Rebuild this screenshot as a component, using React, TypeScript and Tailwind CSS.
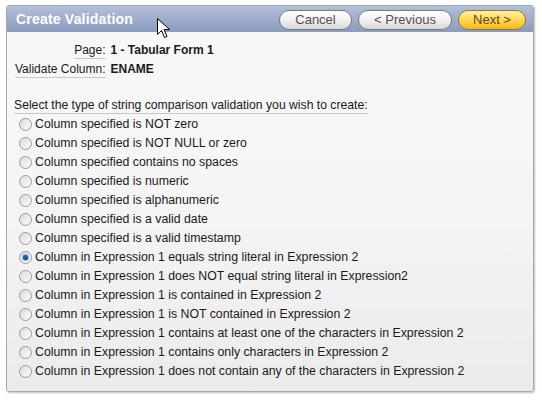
import React from "react";

const options = [
  "Column specified is NOT zero",
  "Column specified is NOT NULL or zero",
  "Column specified contains no spaces",
  "Column specified is numeric",
  "Column specified is alphanumeric",
  "Column specified is a valid date",
  "Column specified is a valid timestamp",
  "Column in Expression 1 equals string literal in Expression 2",
  "Column in Expression 1 does NOT equal string literal in Expression2",
  "Column in Expression 1 is contained in Expression 2",
  "Column in Expression 1 is NOT contained in Expression 2",
  "Column in Expression 1 contains at least one of the characters in Expression 2",
  "Column in Expression 1 contains only characters in Expression 2",
  "Column in Expression 1 does not contain any of the characters in Expression 2",
];

function Radio({ checked }: { checked: boolean }) {
  return (
    <span className="relative inline-flex w-[13px] h-[13px] rounded-full border border-[#9a9a9a] bg-gradient-to-br from-[#dcdcdc] to-[#fbfbfb] items-center justify-center shrink-0">
      {checked && (
        <span className="w-[7px] h-[7px] rounded-full bg-gradient-to-b from-[#2b6fc0] to-[#0d3f85] border border-[#6aa0dc]" />
      )}
    </span>
  );
}

function Btn({ label, primary }: { label: string; primary?: boolean }) {
  return (
    <div
      className={
        "h-[20px] rounded-full border flex items-center justify-center text-[13px] " +
        (primary
          ? "border-[#8a7a3a] bg-gradient-to-b from-[#fff0a8] via-[#ffd84a] to-[#f5b81a] text-[#5a4a20]"
          : "border-[#7a7a7a] bg-gradient-to-b from-[#ffffff] via-[#f1f1f1] to-[#d6d6d6] text-[#505050]")
      }
    >
      {label}
    </div>
  );
}

export default function App() {
  return (
    <div
      className="w-[542px] h-[400px] bg-white relative"
      style={{ fontFamily: '"Liberation Sans", Arial, sans-serif' }}
    >
      <div className="pt-[5px] pl-[6px]">
        <div className="w-[528px] h-[387px] border border-[#a8a8a8] rounded-[3px] shadow-[1px_1px_2px_rgba(0,0,0,0.25)] flex flex-col overflow-hidden bg-gradient-to-b from-[#f8f8f8] via-[#f5f5f5] to-[#ebebeb]">
          <div className="h-[26px] shrink-0 bg-gradient-to-b from-[#b3c0da] to-[#8a9bbd] flex items-center justify-between pl-[9px] pr-[7px]">
            <span className="text-white font-bold text-[14px] tracking-[0.2px]">Create Validation</span>
            <div className="flex gap-[6px] pt-[1px]">
              <div className="w-[73px]"><Btn label="Cancel" /></div>
              <div className="w-[94px]"><Btn label="< Previous" /></div>
              <div className="w-[68px]"><Btn label="Next >" primary /></div>
            </div>
          </div>
          <div className="pl-[7px] pt-[10px] text-[12px] text-[#1a1a1a]">
            <div className="grid grid-cols-[auto_auto] justify-start gap-x-[5px] gap-y-[2px] pl-[1px]">
              <span className="justify-self-end border-b border-[#c8c8c8] leading-[16px]">Page:</span>
              <span className="font-bold leading-[16px]">1 - Tabular Form 1</span>
              <span className="justify-self-end border-b border-[#c8c8c8] leading-[16px]">Validate Column:</span>
              <span className="font-bold leading-[16px]">ENAME</span>
            </div>
            <div className="mt-[19px] inline-block border-b border-[#c8c8c8] leading-[16px] text-[12.2px]">
              Select the type of string comparison validation you wish to create:
            </div>
            <div className="flex flex-col mt-[1px] pl-[5px]">
              {options.map((o, i) => (
                <label key={i} className="flex items-center gap-[3px] h-[19px]">
                  <Radio checked={i === 7} />
                  <span className="text-[12.3px]">{o}</span>
                </label>
              ))}
            </div>
          </div>
        </div>
      </div>
      <svg className="absolute left-[157px] top-[18px]" width="14" height="22" viewBox="0 0 14 22">
        <path d="M0.5 0.5 L0.5 16.5 L4.5 12.5 L7.5 19.5 L10 18.5 L7 11.5 L12.5 11.5 Z" fill="white" stroke="black" strokeWidth="1" strokeLinejoin="miter" />
      </svg>
    </div>
  );
}
